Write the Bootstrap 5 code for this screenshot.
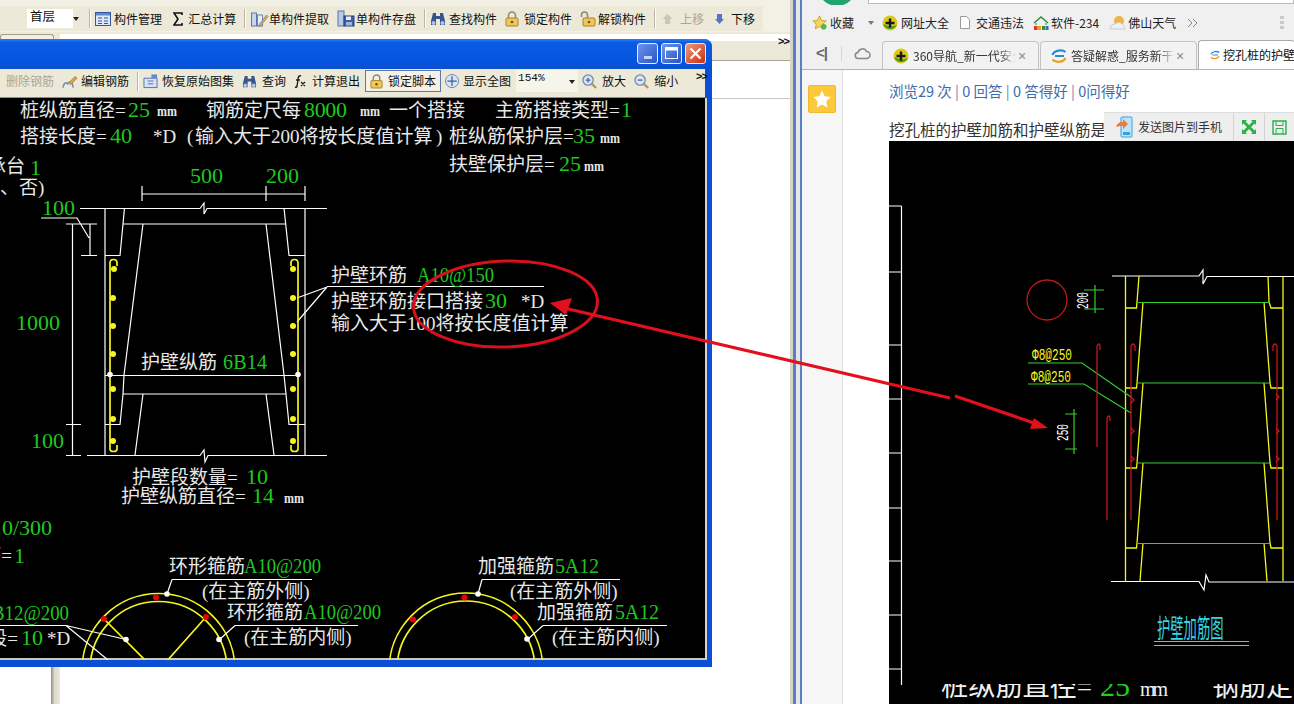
<!DOCTYPE html>
<html lang="zh">
<head>
<meta charset="utf-8">
<title>护壁加筋</title>
<link href="https://cdn.jsdelivr.net/npm/bootstrap@5.3.0/dist/css/bootstrap.min.css" rel="stylesheet">
<style>
html,body{margin:0;height:704px;overflow:hidden;background:#fff}
body{font-family:"Noto Sans CJK SC","Liberation Sans",sans-serif;font-size:12px;line-height:1;color:#111}
.desk{width:1294px;height:704px;position:relative;overflow:hidden}
.app-pane{width:790px;flex:none;background:#fff}
.split{width:12px;flex:none;background:linear-gradient(90deg,#d8d5c8 0,#d8d5c8 3px,#5b7fc6 3px,#5b7fc6 6px,#e6e6e6 6px,#e6e6e6 10px,#5b7fc6 10px)}
.browser{flex:1;min-width:0;background:#fff}
/* app main toolbar */
.app-top{height:32px;background:#f3f1e6;padding:6px 0 0 0}
.tb-main{height:25px;width:763px;background:#ece9d8;padding-left:27px}
.floor{width:50px;height:19px;background:#fff;padding:1px 0 0 3px;font-size:12.5px}
.drop{width:0;height:0;border-left:3.5px solid transparent;border-right:3.5px solid transparent;border-top:4px solid #222}
.floor-arrow{margin:0 10px 0 0}
.tb-sep{width:1px;height:19px;background:#b8b5a4;box-shadow:1px 0 0 #fff;margin:0 5px 0 0}
.tb-btn{display:flex;align-items:center;gap:3px;margin-right:8px;white-space:nowrap}
.tb-btn svg{flex:none}
.gp0{gap:0}.gp1{gap:1px}.gp2{gap:2px}.gp4{gap:4px}.gp5{gap:5px}.gp6{gap:6px}.gp7{gap:7px}
.nudge2{margin-left:2px}.nudge3{margin-left:3px}
.dim{color:#a9a69a}
.app-tabs{height:28px;background:#ece9d8;position:relative}
.app-tabstrip{height:7px;margin-left:60px;background:#fff;position:relative;top:2px}
.tab-stub{position:absolute;left:0;top:2px;width:54px;height:7px;border:1px solid #a09d90;border-bottom:0;border-radius:3px 3px 0 0;background:#f2f0e4}
.chev{position:absolute;font-size:11px;font-weight:700;letter-spacing:-1px;color:#111;font-family:"Liberation Sans",sans-serif}
.chev-app{left:778px;top:4px}
.app-body{height:644px;border-top:1px solid #a8a698;position:relative}
.app-line{position:absolute;left:0;right:0;top:37px;border-top:1px solid #c9c7bd}
.app-bar{position:absolute;left:51px;top:606px;bottom:0;width:9px;background:linear-gradient(90deg,#8f8d84,#dcdacd 40%,#ece9d8)}
/* floating CAD window */
.cad-win{position:absolute;left:-6px;top:39px;width:718px;height:628px;background:#0a4fd6;border-radius:8px 8px 0 0;display:flex;flex-direction:column;box-shadow:inset 0 2px 0 #3c8df4}
.cad-title{height:30px;flex:none;background:linear-gradient(180deg,#2f7df0 0,#0a5be3 12%,#0655e0 70%,#0b4fcf 100%);border-radius:8px 8px 0 0;justify-content:flex-end;gap:3px;padding:0 6px 2px 0}
.cbtn{width:21px;height:21px;border:1px solid #e8eefc;border-radius:3px;background:linear-gradient(135deg,#6f95ea,#2454cc);position:relative}
.cbtn-x{background:linear-gradient(135deg,#ef9a80,#c8300c)}
.cad-tools{height:29px;flex:none;margin:0 7px 0 6px;background:#ece9d8;padding:0 0 4px 6px;position:relative;border-bottom:1px solid #8f8d80}
.cad-tools .tb-btn{margin-right:8px}
.cad-tools .lock-on{border:1px solid #5f76ae;background:#f4f2e6;height:22px;padding:0 4px;margin:0 4px 0 -3px;gap:5px}
.cad-tools .tb-tight{margin-right:5px}
.zoom-sel{width:62px;height:22px;background:#f6f5ec;font-size:11px;padding:3px 0 0 2px;margin-right:4px;position:relative;font-family:"Liberation Mono",monospace}
.zoom-sel .drop{position:absolute;right:3px;top:10px}
.chev-win{left:696px;top:2px}
.cad-canvas{flex:1;margin:0 7px 7px 6px;background:#000;border-bottom:2px solid #c9c6ba;border-right:2px solid #d8d5c8;min-height:0;margin-right:5px}
.cad-canvas svg{display:block}
.t{font-family:"Liberation Serif","Noto Sans CJK SC",serif;font-size:19px;fill:#e8e8e8}
.n{font-family:"Liberation Serif",serif;font-size:22px;fill:#1fc81f}
.ns{font-size:20px}
.mm{font-family:"Liberation Serif",serif;font-size:14.5px;fill:#e8e8e8;font-weight:700}
.ln{stroke:#fff;stroke-width:1.2;fill:none}
.yl{stroke:#f6f61e;stroke-width:1.7;fill:none}
.yd{fill:#f6f61e}
.rd{fill:#e00}
.wd{fill:#fff}
/* browser */
.brow-top{height:5px;position:relative;background:#f0f0f0}
.brow-logo{position:absolute;left:16px;top:-32px;width:38px;height:38px;border-radius:50%;background:#1fa56c}
.brow-addr{position:absolute;left:66px;right:0;top:-6px;height:10px;border:1px solid #b9b9b9;background:#fff}
.fav-bar{height:33px;background:#f0f0f0;padding:2px 0 0 10px;font-size:12px;color:#222;position:relative}
.fav{display:flex;align-items:center;gap:3px;margin-right:11px;white-space:nowrap}
.fav.gp2{gap:2px}.fav.gp6{gap:6px}
.fav-wide{margin-right:14px}.fav-m9{margin-right:9px}.fav-m10{margin-right:10px}
.fav-drop{margin-right:8px;border-top-color:#777}
.fav-dots{position:absolute;right:10px;top:11px;width:4px;height:13px;background:repeating-linear-gradient(180deg,#c9c9c9 0,#c9c9c9 3px,transparent 3px,transparent 5px)}
.tab-bar{height:32px;background:#f0f0f0;padding:4px 0 0 14px;border-bottom:1px solid #b5b5b5;color:#333}
.b-ctl{font-family:"Liberation Sans",sans-serif;font-size:15px;color:#666;width:26px;font-weight:700;letter-spacing:-1px;border-right:1px solid #d5d5d5;height:15px;margin-right:12px;flex:none;line-height:14px}
.cloud{margin-right:11px;flex:none}
.b-tab{width:157px;height:28px;flex:none;border:1px solid #c4c4c4;border-bottom:0;border-radius:4px 4px 0 0;background:#f2f2f2;padding-left:10px;gap:4px;white-space:nowrap;overflow:hidden;position:relative;margin-right:1px}
.b-tab-on{background:#fff;border-color:#aaa;height:29px;z-index:1;padding-left:11px;gap:3px;color:#111;width:97px;border-right:0;margin-right:0}
.tab-txt{width:103px;overflow:hidden;flex:none;line-height:1.5;-webkit-mask-image:linear-gradient(90deg,#000 84%,transparent);mask-image:linear-gradient(90deg,#000 84%,transparent)}
.tab-x{color:#888;font-size:14px;font-family:"Liberation Sans",sans-serif;margin-left:-2px}
.brow-main{height:634px;position:relative}
.side-rail{width:41px;flex:none;background:#f6f6f6;border-right:1px solid #e2e2e2;padding:15px 0 0 6px}
.star-box{width:28px;height:28px;background:#fdc93a;border:1px solid #eeb92a;border-radius:2px}
.page{flex:1;min-width:0;padding-left:46px;position:relative}
.stats{color:#3b6cab;font-size:14.5px;height:21px;padding-top:14px;margin-bottom:0;white-space:nowrap;box-sizing:content-box}
.stats i{font-style:normal;color:#6f7fb5}
.q-line{font-size:15.5px;color:#333;height:30px;margin-top:14px;white-space:nowrap;overflow:hidden;line-height:21px}
.pic{position:relative;margin-top:-8px;height:563px;background:#000}
.pic svg{display:block}
.pic-bar{position:absolute;right:0;top:-29px;height:29px;background:#eee;border-top:1px solid #ddd;color:#333}
.pb{height:100%;padding:0 7px;border-left:1px solid #d4d4d4;gap:5px;white-space:nowrap}
.pb-first{padding:0 11px 0 12px;border-left:0}
.cy{font-family:"Noto Sans CJK SC",sans-serif;font-size:19px;fill:#38d6e0}
.ym{font-family:"Liberation Mono",monospace;font-size:16px;fill:#f6f61e}
.wr{font-family:"Liberation Mono",monospace;font-size:16px;fill:#fff}
.big{font-family:"Liberation Serif","Noto Sans CJK SC",serif;font-size:27px;fill:#f0f0f0}
.big-n{font-size:30px;fill:#22d022}
.big-m{font-size:20px}
.arrows{position:absolute;left:0;top:0;pointer-events:none}
</style>
</head>
<body>
<svg width="0" height="0" class="position-absolute">
 <defs>
  <symbol id="i-grid" viewBox="0 0 16 16"><rect x=".5" y="1.5" width="15" height="13" fill="#dfe8fa" stroke="#33579c"/><rect x="1" y="2" width="14" height="2.5" fill="#5f86cf"/><path d="M3 7h4M3 10h4M3 12.5h4M9 7h4M9 10h4M9 12.5h4" stroke="#33579c"/></symbol>
  <symbol id="i-edit" viewBox="0 0 18 16"><rect x="1" y="2" width="5" height="13" fill="#c7d5ee" stroke="#5a77ad"/><rect x="7" y="4" width="5" height="11" fill="#e9edf5" stroke="#6c84b2"/><path d="M9 13l7-9 1.5 1.5-7 9-2.5.8z" fill="#d9b04a" stroke="#6e7b95" stroke-width=".7"/></symbol>
  <symbol id="i-disk" viewBox="0 0 18 17"><rect x="1" y="1" width="6" height="15" fill="#b9c9e8" stroke="#5a77ad"/><rect x="7" y="6" width="10" height="10" fill="#3c5fa6" stroke="#24407a"/><rect x="9" y="6.5" width="5" height="3.5" fill="#e8eef8"/><rect x="9" y="12" width="6" height="3.5" fill="#9fb5dd"/></symbol>
  <symbol id="i-bino" viewBox="0 0 16 16"><path d="M3 2h3v3h4V2h3l2 8v4H10V8H6v6H1v-4z" fill="#35558f"/><circle cx="3.5" cy="12" r="2" fill="#aec4ea"/><circle cx="12.5" cy="12" r="2" fill="#aec4ea"/></symbol>
  <symbol id="i-lock" viewBox="0 0 14 16"><path d="M3.5 7V4.5a3.5 3.5 0 0 1 7 0V7" fill="none" stroke="#8d8a78" stroke-width="1.6"/><rect x="1" y="7" width="12" height="8" rx="1" fill="#f2c75a" stroke="#a58425"/><circle cx="7" cy="11" r="1.3" fill="#6a5310"/></symbol>
  <symbol id="i-unlock" viewBox="0 0 16 16"><path d="M1.5 6V4a3 3 0 0 1 6 0v3" fill="none" stroke="#8d8a78" stroke-width="1.6"/><rect x="3" y="7" width="12" height="8" rx="1" fill="#f2c75a" stroke="#a58425"/><circle cx="9" cy="11" r="1.3" fill="#6a5310"/></symbol>
  <symbol id="i-mag" viewBox="0 0 16 16"><circle cx="6.5" cy="6.5" r="5.5" fill="#dbe4f3" stroke="#6f85aa" stroke-width="1.3"/><path d="M10.5 10.5L15 15" stroke="#b39a49" stroke-width="2.4"/><path d="M4 6.5h5" stroke="#4467a6" stroke-width="1.4"/></symbol>
  <symbol id="i-magp" viewBox="0 0 16 16"><circle cx="6.5" cy="6.5" r="5.5" fill="#dbe4f3" stroke="#6f85aa" stroke-width="1.3"/><path d="M10.5 10.5L15 15" stroke="#b39a49" stroke-width="2.4"/><path d="M4 6.5h5M6.5 4v5" stroke="#4467a6" stroke-width="1.4"/></symbol>
  <symbol id="i-360" viewBox="0 0 16 16"><circle cx="8" cy="8" r="7.5" fill="#d9c91a"/><path d="M1 9c2 6 11 7 14 1-4 2-9 2-14-1z" fill="#3a9a2a"/><path d="M8 3.5v9M3.5 8h9" stroke="#1a1a1a" stroke-width="2.4"/></symbol>
  <symbol id="i-swirl" viewBox="0 0 16 16"><path d="M1.5 7C3 2.5 11 1 14.5 4" fill="none" stroke="#1f8fd6" stroke-width="2.2"/><path d="M14.5 10c-2 4.5-10 5-13 1.5" fill="none" stroke="#f09a1a" stroke-width="2.2"/><path d="M4 8h9" stroke="#1f8fd6" stroke-width="1.8"/></symbol>
 </defs>
</svg>

<div class="desk d-flex">
 <div class="app-pane d-flex flex-column">
  <div class="app-top">
   <div class="tb-main d-flex align-items-center">
    <div class="floor">首层</div><span class="drop floor-arrow"></span>
    <span class="tb-sep"></span>
    <div class="tb-btn"><svg width="16" height="16"><use href="#i-grid"/></svg>构件管理</div>
    <div class="tb-btn gp5 nudge3"><svg width="10" height="14" viewBox="0 0 10 14"><path d="M9 3V1H1l4 6-4 6h8v-2" fill="none" stroke="#111" stroke-width="1.6"/></svg>汇总计算</div>
    <span class="tb-sep"></span>
    <div class="tb-btn gp0"><svg width="19" height="16"><use href="#i-edit"/></svg>单构件提取</div>
    <div class="tb-btn gp1"><svg width="18" height="17"><use href="#i-disk"/></svg>单构件存盘</div>
    <span class="tb-sep"></span>
    <div class="tb-btn"><svg width="16" height="16"><use href="#i-bino"/></svg>查找构件</div>
    <div class="tb-btn gp5"><svg width="14" height="16"><use href="#i-lock"/></svg>锁定构件</div>
    <div class="tb-btn gp2"><svg width="16" height="16"><use href="#i-unlock"/></svg>解锁构件</div>
    <span class="tb-sep"></span>
    <div class="tb-btn dim gp7 nudge2"><svg width="11" height="12" viewBox="0 0 11 12"><path d="M5.5 1L10.500 6H8v5H3V6H.5z" fill="#c9c7bb"/></svg>上移</div>
    <div class="tb-btn gp7 nudge3"><svg width="9" height="12" viewBox="0 0 9 12"><path d="M2 1h5v5h2L4.500 11 0 6h2z" fill="#4f77c4"/></svg>下移</div>
   </div>
  </div>
  <div class="app-tabs">
   <div class="tab-stub"></div><div class="app-tabstrip"></div>
   <span class="chev chev-app">&gt;&gt;</span>
  </div>
  <div class="app-body"><div class="app-line"></div><div class="app-bar"></div></div>
 </div>
 <div class="split"></div>
 <div class="browser d-flex flex-column">
  <div class="brow-top"><div class="brow-logo"></div><div class="brow-addr"></div></div>
  <div class="fav-bar d-flex align-items-center">
   <div class="fav fav-wide"><svg width="15" height="15" viewBox="0 0 16 16"><path d="M8 1l2.200 4.700 5 .6-3.700 3.500 1 5L8 12.300 3.500 14.800l1-5L.8 6.300l5-.6z" fill="#f4d35e" stroke="#c9a227"/><circle cx="12.500" cy="12.500" r="3" fill="#52b652"/></svg>收藏</div>
   <span class="drop fav-drop"></span>
   <div class="fav"><svg width="16" height="16"><use href="#i-360"/></svg>网址大全</div>
   <div class="fav gp6 fav-m9"><svg width="10" height="13" viewBox="0 0 10 13"><path d="M.5.500h6l3 3v9H.5z" fill="#fff" stroke="#999"/></svg>交通违法</div>
   <div class="fav gp2 fav-m10"><svg width="16" height="16" viewBox="0 0 16 16"><path d="M1 8l7-6 7 6" fill="none" stroke="#2f8f3a" stroke-width="1.500"/><path d="M3 8v2M13 8v2" stroke="#2f8f3a"/><rect x="1" y="11" width="3.500" height="4" fill="#d33"/><rect x="5" y="11" width="3" height="4" fill="#e7a020"/><rect x="9" y="11" width="3" height="4" fill="#2f8f3a"/><rect x="12.500" y="11" width="3" height="4" fill="#3569c4"/></svg>软件-234</div>
   <div class="fav gp2"><svg width="17" height="15" viewBox="0 0 17 15"><circle cx="10" cy="6" r="5" fill="#f4b23d"/><path d="M1 14c0-3 2-5 5-5 3-3 8-2 10 5z" fill="#eef1f4" stroke="#c7cdd3"/></svg>佛山天气</div>
   <svg width="11" height="10" viewBox="0 0 11 10"><path d="M1 1l4 4-4 4M6 1l4 4-4 4" fill="none" stroke="#888"/></svg>
   <span class="fav-dots"></span>
  </div>
  <div class="tab-bar d-flex align-items-end">
   <div class="b-ctl align-self-start mt-1">&lt;|</div>
   <svg class="align-self-start mt-1 cloud" width="17" height="14" viewBox="0 0 17 14"><path d="M4.500 12.500a3 3 0 0 1-.5-6 4.500 4.500 0 0 1 8.500-1 3.500 3.500 0 0 1 0 7z" fill="none" stroke="#888" stroke-width="1.500"/></svg>
   <div class="b-tab d-flex align-items-center"><svg class="flex-none" width="16" height="16"><use href="#i-360"/></svg><span class="tab-txt">360导航_新一代安全</span><span class="tab-x">×</span></div>
   <div class="b-tab d-flex align-items-center"><svg class="flex-none" width="16" height="16"><use href="#i-swirl"/></svg><span class="tab-txt">答疑解惑_服务新干线</span><span class="tab-x">×</span></div>
   <div class="b-tab b-tab-on d-flex align-items-center"><svg class="flex-none" width="16" height="16"><use href="#i-swirl"/></svg>挖孔桩的护壁</div>
  </div>
  <div class="brow-main d-flex">
   <div class="side-rail"><div class="star-box d-flex align-items-center justify-content-center"><svg width="20" height="20" viewBox="0 0 20 20"><path d="M10 1.500l2.700 5.700 6.100.8-4.500 4.300 1.100 6.200L10 15.500l-5.400 3 1.100-6.200L1.200 8l6.100-.8z" fill="#fff"/></svg></div></div>
   <div class="page">
    <div class="stats">浏览29 次 <i>|</i> 0 回答 <i>|</i> 0 答得好 <i>|</i> 0问得好</div>
    <div class="q-line">挖孔桩的护壁加筋和护壁纵筋是</div>
    <div class="pic">
     <div class="pic-bar d-flex">
      <div class="pb pb-first d-flex align-items-center"><svg width="17" height="22" viewBox="0 0 17 22"><rect x="5" y="1" width="11" height="20" rx="1" fill="#bfe3f7" stroke="#35a3dd"/><rect x="7" y="16" width="7" height="3" fill="#35a3dd"/><path d="M0 11c1-4 4-5 7-5V3l5 5-5 5v-3c-3 0-5 0-7 1z" fill="#ef7a3a"/></svg>发送图片到手机</div>
      <div class="pb d-flex align-items-center"><svg width="16" height="16" viewBox="0 0 16 16"><path d="M1 1h5L4.500 2.500 8 6l3.500-3.500L10 1h5v5l-1.500-1.500L10 8l3.500 3.500L15 10v5h-5l1.500-1.500L8 10l-3.500 3.500L6 15H1v-5l1.500 1.500L6 8 2.500 4.500 1 6z" fill="#27b24a"/></svg></div>
      <div class="pb d-flex align-items-center"><svg width="15" height="15" viewBox="0 0 15 15"><path d="M1 1h13v13H1z" fill="none" stroke="#27b24a" stroke-width="1.400"/><path d="M4 1.500v4h7v-4M4 13.500v-5h7v5" fill="none" stroke="#27b24a"/></svg></div>
     </div>
     <svg width="405" height="563" viewBox="889 141 405 563">
      <g class="ln"><path d="M901.500 206V685M889 206h12.500M889 272h12.500M889 345h12.500M889 399h12.500M889 453h12.500M889 508h12.500M889 561h12.500M889 615h12.500M889 669h12.500"/>
       <path d="M1112 276H1199L1203 270 1203 284 1207 276.500H1294M1111 581.500H1199L1204 590 1206 575 1209 582H1294"/></g>
      <g fill="none" stroke="#f6f61e" stroke-width="1.300">
       <path d="M1125.500 276V581M1283 276V581M1139 276L1137 302 1136.500 308H1125.500M1268 276L1269 302 1271 308H1283"/>
       <path d="M1143 302L1137 383 1136.500 388H1125.500M1264 302L1270 383 1271 388H1283M1143 383L1137 463 1136.500 468H1125.500M1264 383L1270 463 1271 468H1283M1143 463L1137 543 1136.500 548H1125.500M1264 463L1270 543 1271 548H1283M1143 543L1140 581M1264 543L1267 581"/>
      </g>
      <g stroke="#2fd12f" stroke-width="1.200" fill="none">
       <path d="M1138 302.500H1270M1138 383H1270M1138 463H1270M1138 543.500H1270"/>
       <path d="M1095 285V313M1084 290H1104M1084 309H1104M1074 409V454M1065 414H1077M1065 449H1077M1028 363H1082L1131 397M1028 384H1084L1131 413"/>
      </g>
      <g stroke="#c41818" stroke-width="1.300" fill="none">
       <circle cx="1047" cy="300" r="20"/><path d="M1097 447V346q2-4 3 0v4M1107 520V418q2-4 3 0v3M1131 520V346q2-4 4 0v5M1277 520V346q-2-4-4 0v5"/>
       <path d="M1131 397l3 3-3 3M1131 428l3 3-3 3M1131 456l3 3-3 3M1276 394l3 3-3 3M1276 428l3 3-3 3M1276 456l3 3-3 3"/>
      </g>
      <text class="ym" x="1032" y="360" textLength="40" lengthAdjust="spacingAndGlyphs">Φ8@250</text>
      <text class="ym" x="1031" y="382" textLength="40" lengthAdjust="spacingAndGlyphs">Φ8@250</text>
      <text class="wr" transform="translate(1088,309) rotate(-90)" textLength="17" lengthAdjust="spacingAndGlyphs">200</text>
      <text class="wr" transform="translate(1068,441) rotate(-90)" textLength="17" lengthAdjust="spacingAndGlyphs">250</text>
      <text class="cy" transform="translate(1157,638) scale(.7,1.350)">护壁加筋图</text>
      <path d="M1154 641.500H1249M1154 645.500H1249" stroke="#38d6e0" stroke-width="1.100"/>
      <text class="big" x="941" y="696" textLength="151" lengthAdjust="spacingAndGlyphs">桩纵筋直径=</text>
      <text class="big big-n" x="1100" y="696">25</text>
      <text class="big big-m" x="1140" y="696" textLength="28">mm</text>
      <text class="big" x="1212" y="696">钢筋定</text>
      <rect x="930" y="660" width="364" height="24" fill="#000"/>
     </svg>
    </div>
   </div>
  </div>
 </div>

 <!-- floating CAD window -->
 <div class="cad-win">
  <div class="cad-title d-flex align-items-center">
   <div class="cbtn d-flex align-items-end justify-content-center pb-1"><svg width="8" height="3"><rect width="8" height="3" fill="#fff" opacity=".7"/></svg></div>
   <div class="cbtn d-flex align-items-center justify-content-center"><svg width="13" height="12"><rect x=".5" y=".5" width="12" height="11" fill="none" stroke="#fff"/><rect x="1" y="1" width="11" height="2.500" fill="#fff"/></svg></div>
   <div class="cbtn cbtn-x d-flex align-items-center justify-content-center"><svg width="13" height="13"><path d="M1.500 1.500l10 10M11.500 1.500l-10 10" stroke="#fff" stroke-width="2.200"/></svg></div>
  </div>
  <div class="cad-tools d-flex align-items-center">
   <div class="tb-btn dim">删除钢筋</div>
   <div class="tb-btn"><svg width="16" height="15" viewBox="0 0 17 15"><path d="M1 14c1-5 3-6 5-4 2-3 4-3 5 0l1 4" fill="none" stroke="#6f8fc7" stroke-width="1.700"/><path d="M7 9l7-7 2 2-7 7z" fill="#d8a54a" stroke="#8a6a20" stroke-width=".6"/></svg>编辑钢筋</div>
   <span class="tb-sep"></span>
   <div class="tb-btn gp4"><svg width="15" height="16" viewBox="0 0 16 16"><path d="M1 5h10l4 0v10H1z" fill="#d6e2f6" stroke="#4f6fae"/><path d="M5 8h6M5 11h6" stroke="#4f6fae"/><path d="M9 1h6v4H9z" fill="#5f86cf"/></svg>恢复原始图集</div>
   <div class="tb-btn gp5"><svg width="15" height="15"><use href="#i-bino"/></svg>查询</div>
   <div class="tb-btn gp6"><svg width="12" height="14" viewBox="0 0 12 14"><path d="M7 2C5 1 4 3 4 6l-1 6c-.3 1.500-1 1.500-2 1M2 6h4M7 8l4 4M11 8l-4 4" fill="none" stroke="#222" stroke-width="1.400"/></svg>计算退出</div>
   <div class="tb-btn lock-on"><svg width="13" height="15"><use href="#i-lock"/></svg>锁定脚本</div>
   <div class="tb-btn tb-tight"><svg width="15" height="15" viewBox="0 0 16 16"><circle cx="7.500" cy="7.500" r="7" fill="#dbe4f3" stroke="#6f85aa"/><path d="M7.500 2.500v10M2.500 7.500h10" stroke="#3a5fa5" stroke-width="1.400"/></svg>显示全图</div>
   <div class="zoom-sel">154%<span class="drop"></span></div>
   <div class="tb-btn gp5"><svg width="15" height="15"><use href="#i-magp"/></svg>放大</div>
   <div class="tb-btn gp5"><svg width="15" height="15"><use href="#i-mag"/></svg>缩小</div>
   <span class="chev chev-win">&gt;&gt;</span>
  </div>
  <div class="cad-canvas">
   <svg width="705" height="562" viewBox="0 98 705 562">
    <!-- top form -->
    <text class="t" x="20" y="117">桩纵筋直径=</text><text class="n" x="128" y="117">25</text><text class="mm" x="157" y="116" textLength="20" lengthAdjust="spacingAndGlyphs">mm</text>
    <text class="t" x="206" y="117">钢筋定尺每</text><text class="n" x="304" y="117" textLength="43">8000</text><text class="mm" x="360" y="116" textLength="20" lengthAdjust="spacingAndGlyphs">mm</text>
    <text class="t" x="389" y="117">一个搭接</text><text class="t" x="495" y="117">主筋搭接类型=</text><text class="n" x="621" y="117">1</text>
    <text class="t" x="20" y="143">搭接长度=</text><text class="n" x="110" y="143">40</text><text class="t" x="153" y="143">*D</text>
    <text class="t" x="187" y="143">(</text><text class="t" x="195" y="143">输入大于200将按长度值计算</text><text class="t" x="436" y="143">)</text>
    <text class="t" x="449" y="143">桩纵筋保护层=</text><text class="n" x="573" y="143">35</text><text class="mm" x="600" y="143" textLength="20" lengthAdjust="spacingAndGlyphs">mm</text>
    <text class="t" x="449" y="171">扶壁保护层=</text><text class="n" x="559" y="171">25</text><text class="mm" x="584" y="171" textLength="20" lengthAdjust="spacingAndGlyphs">mm</text>
    <text class="t" x="-13" y="173">承台</text><text class="n" x="30" y="175">1</text>
    <text class="t" x="0" y="194">、否)</text>
    <!-- section dims -->
    <text class="n" x="190" y="183">500</text><text class="n" x="266" y="183">200</text>
    <text class="n" x="42" y="215">100</text><text class="n" x="16" y="330">1000</text><text class="n" x="31" y="448">100</text>
    <g class="ln">
     <path d="M142 186V201M266 186V201M305 186V201M142 194H305"/>
     <path d="M80 208.500H200L204 203 204 214 207 208.500H327M87 455.500H200L204 450 205 462 208 455.500H327"/>
     <path d="M105 208V455.500M305 208V455.500M123 224H286"/>
     <path d="M124.500 208L120 255.500H105M284 208L289 255.500H305"/>
     <path d="M143 224L124 375 123 394 120 424.500H105M266 224L284 375 286 394 289 424.500H305"/>
     <path d="M105 375.500H298M123 394H286M143 394L135 455M266 394L274 455"/>
     <path d="M72.500 224V455M66 224H97M90 224V255M81 255.500H97M66 424.500H81M66 455.500H81M41 218H77L89 238"/>
     <path d="M327 287L297 298M327 287L297 322M327 286.500H544"/>
    </g>
    <g class="yl"><path d="M117 266V262.500Q117 259.500 113.500 259.500 110 259.500 110 263V449Q110 451.500 113.500 451.500 117 451.500 117 449V445"/>
     <path d="M291 266V262.500Q291 259.500 294.500 259.500 298 259.500 298 263V449Q298 451.500 294.500 451.500 291 451.500 291 449V445"/></g>
    <g class="yd"><circle cx="114" cy="269" r="3"/><circle cx="113" cy="298" r="3"/><circle cx="113" cy="326" r="3"/><circle cx="113" cy="354" r="3"/><circle cx="113" cy="389" r="3"/><circle cx="113" cy="419" r="3"/><circle cx="113" cy="441" r="3"/>
     <circle cx="293" cy="269" r="3"/><circle cx="293" cy="298" r="3"/><circle cx="293" cy="326" r="3"/><circle cx="293" cy="354" r="3"/><circle cx="293" cy="389" r="3"/><circle cx="293" cy="419" r="3"/><circle cx="293" cy="441" r="3"/></g>
    <circle class="wd" cx="110" cy="374.500" r="2.800"/><circle class="wd" cx="298" cy="374.500" r="2.800"/>
    <text class="t" x="141" y="369">护壁纵筋</text><text class="n ns" x="223" y="369" textLength="44">6B14</text>
    <text class="t" x="331" y="282">护壁环筋</text><text class="n ns" x="417" y="282" textLength="77" lengthAdjust="spacingAndGlyphs">A10@150</text>
    <text class="t" x="331" y="308">护壁环筋接口搭接</text><text class="n" x="485" y="308">30</text><text class="t" x="521" y="308">*D</text>
    <text class="t" x="331" y="330">输入大于100将按长度值计算</text>
    <text class="t" x="132" y="484">护壁段数量=</text><text class="n" x="246" y="484">10</text>
    <text class="t" x="121" y="503">护壁纵筋直径=</text><text class="n" x="252" y="503">14</text><text class="mm" x="284" y="503" textLength="20" lengthAdjust="spacingAndGlyphs">mm</text>
    <text class="n" x="52" y="535" text-anchor="end">0/300</text>
    <text class="t" x="12" y="562" text-anchor="end">筋=</text><text class="n" x="14" y="563">1</text>
    <text class="n ns" x="-8" y="620" textLength="77" lengthAdjust="spacingAndGlyphs">B12@200</text>
    <text class="t" x="18" y="645" text-anchor="end">段=</text><text class="n" x="21" y="645">10</text><text class="t" x="47" y="645">*D</text>
    <!-- rings -->
    <g class="yl"><circle cx="158.500" cy="670" r="76.500"/><circle cx="158.500" cy="670" r="68.500"/><path d="M104 619L147 662M206 617L166 662"/>
     <circle cx="466" cy="670" r="77"/><circle cx="466" cy="670" r="69"/></g>
    <g class="rd"><circle cx="156" cy="597.500" r="3"/><circle cx="104" cy="619" r="3"/><circle cx="206" cy="617" r="3"/><circle cx="464.500" cy="597.500" r="3"/><circle cx="413" cy="619.500" r="3"/><circle cx="515" cy="617" r="3"/></g>
    <g class="ln"><path d="M172 579.500H312M172 579.500L167 594M235 625.500H358M235 625.500L219 640M0 625.500H66L126 639.500M66 625.500L108 660"/>
     <path d="M482 579.500H620M482 579.500L478 594M543 625.500H667M543 625.500L527 640"/></g>
    <g class="wd"><circle cx="167" cy="594" r="2.800"/><circle cx="126" cy="639.500" r="2.800"/><circle cx="219" cy="639.500" r="2.800"/><circle cx="478" cy="594" r="2.800"/><circle cx="527" cy="639" r="2.800"/></g>
    <text class="t" x="169" y="573">环形箍筋</text><text class="n ns" x="244" y="573" textLength="77" lengthAdjust="spacingAndGlyphs">A10@200</text>
    <text class="t" x="202" y="598">(在主筋外侧)</text>
    <text class="t" x="227" y="619">环形箍筋</text><text class="n ns" x="304" y="619" textLength="77" lengthAdjust="spacingAndGlyphs">A10@200</text>
    <text class="t" x="244" y="644">(在主筋内侧)</text>
    <text class="t" x="478" y="573">加强箍筋</text><text class="n ns" x="555" y="573" textLength="44">5A12</text>
    <text class="t" x="510" y="598">(在主筋外侧)</text>
    <text class="t" x="537" y="619">加强箍筋</text><text class="n ns" x="615" y="619" textLength="44">5A12</text>
    <text class="t" x="552" y="644">(在主筋内侧)</text>
   </svg>
  </div>
 </div>

 <!-- hand-drawn red annotation over everything -->
 <svg class="arrows" width="1294" height="704" viewBox="0 0 1294 704">
  <ellipse cx="505.500" cy="304" rx="92" ry="43" transform="rotate(-2 505.500 304)" fill="none" stroke="#d8101c" stroke-width="3"/>
  <path d="M950 398L564 308" stroke="#e2101c" stroke-width="3.200" fill="none"/>
  <path d="M550 303L572 298 566 315z" fill="#e2101c"/>
  <path d="M955 396L1034 423" stroke="#e2101c" stroke-width="3.200" fill="none"/>
  <path d="M1048 428L1034 418 1030 429z" fill="#e2101c"/>
 </svg>
</div>
<script src="https://cdn.jsdelivr.net/npm/bootstrap@5.3.0/dist/js/bootstrap.bundle.min.js"></script>
</body>
</html>
